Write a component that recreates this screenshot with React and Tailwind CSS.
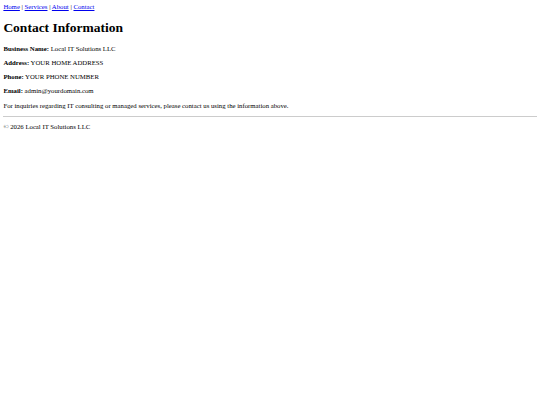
export default function App() {
  return (
    <div className="min-h-[405px] bg-white p-[3.375px] font-['Liberation_Serif','Times_New_Roman',serif] text-[6.75px] leading-[1.15] text-black">
      <nav>
        <a href="#" className="text-[#0000ee] underline">Home</a> |{" "}
        <a href="#" className="text-[#0000ee] underline">Services</a> |{" "}
        <a href="#" className="text-[#0000ee] underline">About</a> |{" "}
        <a href="#" className="text-[#0000ee] underline">Contact</a>
      </nav>
      <h1 className="mt-[8.5px] mb-[9.5px] font-['Liberation_Serif','Times_New_Roman',serif] text-[13.5px] font-bold">Contact Information</h1>
      <p className="my-[6.5px]"><b>Business Name:</b> Local IT Solutions LLC</p>
      <p className="my-[6.5px]"><b>Address:</b> YOUR HOME ADDRESS</p>
      <p className="my-[6.5px]"><b>Phone:</b> YOUR PHONE NUMBER</p>
      <p className="my-[6.5px]"><b>Email:</b> admin@yourdomain.com</p>
      <p className="my-[6.5px]">For inquiries regarding IT consulting or managed services, please contact us using the information above.</p>
      <hr className="my-[3.375px] border-t border-[#cccccc]" />
      <footer>
        <p className="my-[6.5px]">© 2026 Local IT Solutions LLC</p>
      </footer>
    </div>
  );
}
